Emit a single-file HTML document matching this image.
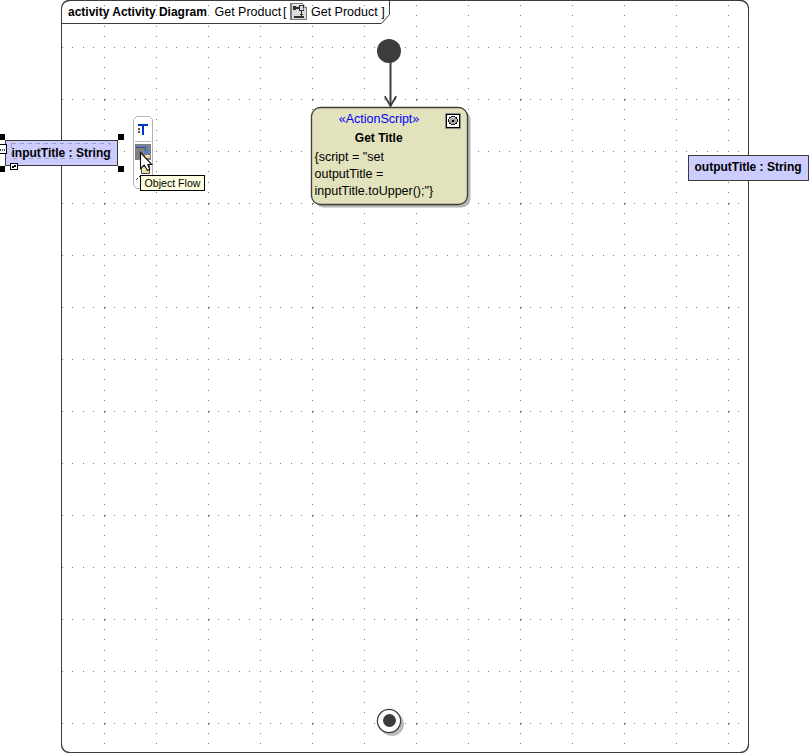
<!DOCTYPE html>
<html><head><meta charset="utf-8"><style>
html,body{margin:0;padding:0;background:#fff;width:809px;height:753px;overflow:hidden}
svg{position:absolute;left:0;top:0}
text{font-family:'Liberation Sans',sans-serif;}
</style></head><body>
<svg width="809" height="753" viewBox="0 0 809 753" shape-rendering="auto">
<!-- frame -->
<rect x="61.5" y="0.5" width="687" height="752" rx="8" ry="8" fill="#fff" stroke="none"/>
<g fill="#3c3c3c" shape-rendering="crispEdges">
<rect x="69" y="0" width="672" height="1"/>
<rect x="69" y="752" width="672" height="1"/>
<rect x="61" y="8" width="1" height="737"/>
<rect x="748" y="8" width="1" height="737"/>
</g>
<path d="M61.5 8.5A8 8 0 0 1 69.5 0.5M740.5 0.5A8 8 0 0 1 748.5 8.5M748.5 744.5A8 8 0 0 1 740.5 752.5M69.5 752.5A8 8 0 0 1 61.5 744.5" fill="none" stroke="#3c3c3c" stroke-width="1.35"/>
<!-- grid -->
<path d="M62 47h1v1h-1zM62 99h1v1h-1zM62 151h1v1h-1zM62 203h1v1h-1zM62 255h1v1h-1zM62 307h1v1h-1zM62 359h1v1h-1zM62 411h1v1h-1zM62 463h1v1h-1zM62 515h1v1h-1zM62 567h1v1h-1zM62 619h1v1h-1zM62 671h1v1h-1zM62 723h1v1h-1zM72 47h1v1h-1zM72 99h1v1h-1zM72 151h1v1h-1zM72 203h1v1h-1zM72 255h1v1h-1zM72 307h1v1h-1zM72 359h1v1h-1zM72 411h1v1h-1zM72 463h1v1h-1zM72 515h1v1h-1zM72 567h1v1h-1zM72 619h1v1h-1zM72 671h1v1h-1zM72 723h1v1h-1zM83 47h1v1h-1zM83 99h1v1h-1zM83 151h1v1h-1zM83 203h1v1h-1zM83 255h1v1h-1zM83 307h1v1h-1zM83 359h1v1h-1zM83 411h1v1h-1zM83 463h1v1h-1zM83 515h1v1h-1zM83 567h1v1h-1zM83 619h1v1h-1zM83 671h1v1h-1zM83 723h1v1h-1zM93 47h1v1h-1zM93 99h1v1h-1zM93 151h1v1h-1zM93 203h1v1h-1zM93 255h1v1h-1zM93 307h1v1h-1zM93 359h1v1h-1zM93 411h1v1h-1zM93 463h1v1h-1zM93 515h1v1h-1zM93 567h1v1h-1zM93 619h1v1h-1zM93 671h1v1h-1zM93 723h1v1h-1zM104 5h1v1h-1zM104 15h1v1h-1zM104 26h1v1h-1zM104 36h1v1h-1zM104 47h1v1h-1zM104 57h1v1h-1zM104 67h1v1h-1zM104 78h1v1h-1zM104 88h1v1h-1zM104 99h1v1h-1zM104 100h1v1h-1zM104 109h1v1h-1zM104 119h1v1h-1zM104 130h1v1h-1zM104 140h1v1h-1zM104 151h1v1h-1zM104 161h1v1h-1zM104 171h1v1h-1zM104 182h1v1h-1zM104 192h1v1h-1zM104 203h1v1h-1zM104 204h1v1h-1zM104 213h1v1h-1zM104 223h1v1h-1zM104 234h1v1h-1zM104 244h1v1h-1zM104 255h1v1h-1zM104 265h1v1h-1zM104 275h1v1h-1zM104 286h1v1h-1zM104 296h1v1h-1zM104 307h1v1h-1zM104 308h1v1h-1zM104 317h1v1h-1zM104 327h1v1h-1zM104 338h1v1h-1zM104 348h1v1h-1zM104 359h1v1h-1zM104 369h1v1h-1zM104 379h1v1h-1zM104 390h1v1h-1zM104 400h1v1h-1zM104 411h1v1h-1zM104 412h1v1h-1zM104 421h1v1h-1zM104 431h1v1h-1zM104 442h1v1h-1zM104 452h1v1h-1zM104 463h1v1h-1zM104 473h1v1h-1zM104 483h1v1h-1zM104 494h1v1h-1zM104 504h1v1h-1zM104 515h1v1h-1zM104 516h1v1h-1zM104 525h1v1h-1zM104 535h1v1h-1zM104 546h1v1h-1zM104 556h1v1h-1zM104 567h1v1h-1zM104 577h1v1h-1zM104 587h1v1h-1zM104 598h1v1h-1zM104 608h1v1h-1zM104 619h1v1h-1zM104 620h1v1h-1zM104 629h1v1h-1zM104 639h1v1h-1zM104 650h1v1h-1zM104 660h1v1h-1zM104 671h1v1h-1zM104 681h1v1h-1zM104 691h1v1h-1zM104 702h1v1h-1zM104 712h1v1h-1zM104 723h1v1h-1zM104 724h1v1h-1zM104 733h1v1h-1zM104 743h1v1h-1zM105 99h1v1h-1zM105 203h1v1h-1zM105 307h1v1h-1zM105 411h1v1h-1zM105 515h1v1h-1zM105 619h1v1h-1zM105 723h1v1h-1zM114 47h1v1h-1zM114 99h1v1h-1zM114 151h1v1h-1zM114 203h1v1h-1zM114 255h1v1h-1zM114 307h1v1h-1zM114 359h1v1h-1zM114 411h1v1h-1zM114 463h1v1h-1zM114 515h1v1h-1zM114 567h1v1h-1zM114 619h1v1h-1zM114 671h1v1h-1zM114 723h1v1h-1zM124 47h1v1h-1zM124 99h1v1h-1zM124 151h1v1h-1zM124 203h1v1h-1zM124 255h1v1h-1zM124 307h1v1h-1zM124 359h1v1h-1zM124 411h1v1h-1zM124 463h1v1h-1zM124 515h1v1h-1zM124 567h1v1h-1zM124 619h1v1h-1zM124 671h1v1h-1zM124 723h1v1h-1zM135 47h1v1h-1zM135 99h1v1h-1zM135 151h1v1h-1zM135 203h1v1h-1zM135 255h1v1h-1zM135 307h1v1h-1zM135 359h1v1h-1zM135 411h1v1h-1zM135 463h1v1h-1zM135 515h1v1h-1zM135 567h1v1h-1zM135 619h1v1h-1zM135 671h1v1h-1zM135 723h1v1h-1zM145 47h1v1h-1zM145 99h1v1h-1zM145 151h1v1h-1zM145 203h1v1h-1zM145 255h1v1h-1zM145 307h1v1h-1zM145 359h1v1h-1zM145 411h1v1h-1zM145 463h1v1h-1zM145 515h1v1h-1zM145 567h1v1h-1zM145 619h1v1h-1zM145 671h1v1h-1zM145 723h1v1h-1zM156 5h1v1h-1zM156 15h1v1h-1zM156 26h1v1h-1zM156 36h1v1h-1zM156 47h1v1h-1zM156 57h1v1h-1zM156 67h1v1h-1zM156 78h1v1h-1zM156 88h1v1h-1zM156 99h1v1h-1zM156 109h1v1h-1zM156 119h1v1h-1zM156 130h1v1h-1zM156 140h1v1h-1zM156 151h1v1h-1zM156 161h1v1h-1zM156 171h1v1h-1zM156 182h1v1h-1zM156 192h1v1h-1zM156 203h1v1h-1zM156 213h1v1h-1zM156 223h1v1h-1zM156 234h1v1h-1zM156 244h1v1h-1zM156 255h1v1h-1zM156 265h1v1h-1zM156 275h1v1h-1zM156 286h1v1h-1zM156 296h1v1h-1zM156 307h1v1h-1zM156 317h1v1h-1zM156 327h1v1h-1zM156 338h1v1h-1zM156 348h1v1h-1zM156 359h1v1h-1zM156 369h1v1h-1zM156 379h1v1h-1zM156 390h1v1h-1zM156 400h1v1h-1zM156 411h1v1h-1zM156 421h1v1h-1zM156 431h1v1h-1zM156 442h1v1h-1zM156 452h1v1h-1zM156 463h1v1h-1zM156 473h1v1h-1zM156 483h1v1h-1zM156 494h1v1h-1zM156 504h1v1h-1zM156 515h1v1h-1zM156 525h1v1h-1zM156 535h1v1h-1zM156 546h1v1h-1zM156 556h1v1h-1zM156 567h1v1h-1zM156 577h1v1h-1zM156 587h1v1h-1zM156 598h1v1h-1zM156 608h1v1h-1zM156 619h1v1h-1zM156 629h1v1h-1zM156 639h1v1h-1zM156 650h1v1h-1zM156 660h1v1h-1zM156 671h1v1h-1zM156 681h1v1h-1zM156 691h1v1h-1zM156 702h1v1h-1zM156 712h1v1h-1zM156 723h1v1h-1zM156 733h1v1h-1zM156 743h1v1h-1zM166 47h1v1h-1zM166 99h1v1h-1zM166 151h1v1h-1zM166 203h1v1h-1zM166 255h1v1h-1zM166 307h1v1h-1zM166 359h1v1h-1zM166 411h1v1h-1zM166 463h1v1h-1zM166 515h1v1h-1zM166 567h1v1h-1zM166 619h1v1h-1zM166 671h1v1h-1zM166 723h1v1h-1zM176 47h1v1h-1zM176 99h1v1h-1zM176 151h1v1h-1zM176 203h1v1h-1zM176 255h1v1h-1zM176 307h1v1h-1zM176 359h1v1h-1zM176 411h1v1h-1zM176 463h1v1h-1zM176 515h1v1h-1zM176 567h1v1h-1zM176 619h1v1h-1zM176 671h1v1h-1zM176 723h1v1h-1zM187 47h1v1h-1zM187 99h1v1h-1zM187 151h1v1h-1zM187 203h1v1h-1zM187 255h1v1h-1zM187 307h1v1h-1zM187 359h1v1h-1zM187 411h1v1h-1zM187 463h1v1h-1zM187 515h1v1h-1zM187 567h1v1h-1zM187 619h1v1h-1zM187 671h1v1h-1zM187 723h1v1h-1zM197 47h1v1h-1zM197 99h1v1h-1zM197 151h1v1h-1zM197 203h1v1h-1zM197 255h1v1h-1zM197 307h1v1h-1zM197 359h1v1h-1zM197 411h1v1h-1zM197 463h1v1h-1zM197 515h1v1h-1zM197 567h1v1h-1zM197 619h1v1h-1zM197 671h1v1h-1zM197 723h1v1h-1zM208 5h1v1h-1zM208 15h1v1h-1zM208 26h1v1h-1zM208 36h1v1h-1zM208 47h1v1h-1zM208 57h1v1h-1zM208 67h1v1h-1zM208 78h1v1h-1zM208 88h1v1h-1zM208 99h1v1h-1zM208 100h1v1h-1zM208 109h1v1h-1zM208 119h1v1h-1zM208 130h1v1h-1zM208 140h1v1h-1zM208 151h1v1h-1zM208 161h1v1h-1zM208 171h1v1h-1zM208 182h1v1h-1zM208 192h1v1h-1zM208 203h1v1h-1zM208 204h1v1h-1zM208 213h1v1h-1zM208 223h1v1h-1zM208 234h1v1h-1zM208 244h1v1h-1zM208 255h1v1h-1zM208 265h1v1h-1zM208 275h1v1h-1zM208 286h1v1h-1zM208 296h1v1h-1zM208 307h1v1h-1zM208 308h1v1h-1zM208 317h1v1h-1zM208 327h1v1h-1zM208 338h1v1h-1zM208 348h1v1h-1zM208 359h1v1h-1zM208 369h1v1h-1zM208 379h1v1h-1zM208 390h1v1h-1zM208 400h1v1h-1zM208 411h1v1h-1zM208 412h1v1h-1zM208 421h1v1h-1zM208 431h1v1h-1zM208 442h1v1h-1zM208 452h1v1h-1zM208 463h1v1h-1zM208 473h1v1h-1zM208 483h1v1h-1zM208 494h1v1h-1zM208 504h1v1h-1zM208 515h1v1h-1zM208 516h1v1h-1zM208 525h1v1h-1zM208 535h1v1h-1zM208 546h1v1h-1zM208 556h1v1h-1zM208 567h1v1h-1zM208 577h1v1h-1zM208 587h1v1h-1zM208 598h1v1h-1zM208 608h1v1h-1zM208 619h1v1h-1zM208 620h1v1h-1zM208 629h1v1h-1zM208 639h1v1h-1zM208 650h1v1h-1zM208 660h1v1h-1zM208 671h1v1h-1zM208 681h1v1h-1zM208 691h1v1h-1zM208 702h1v1h-1zM208 712h1v1h-1zM208 723h1v1h-1zM208 724h1v1h-1zM208 733h1v1h-1zM208 743h1v1h-1zM209 99h1v1h-1zM209 203h1v1h-1zM209 307h1v1h-1zM209 411h1v1h-1zM209 515h1v1h-1zM209 619h1v1h-1zM209 723h1v1h-1zM218 47h1v1h-1zM218 99h1v1h-1zM218 151h1v1h-1zM218 203h1v1h-1zM218 255h1v1h-1zM218 307h1v1h-1zM218 359h1v1h-1zM218 411h1v1h-1zM218 463h1v1h-1zM218 515h1v1h-1zM218 567h1v1h-1zM218 619h1v1h-1zM218 671h1v1h-1zM218 723h1v1h-1zM228 47h1v1h-1zM228 99h1v1h-1zM228 151h1v1h-1zM228 203h1v1h-1zM228 255h1v1h-1zM228 307h1v1h-1zM228 359h1v1h-1zM228 411h1v1h-1zM228 463h1v1h-1zM228 515h1v1h-1zM228 567h1v1h-1zM228 619h1v1h-1zM228 671h1v1h-1zM228 723h1v1h-1zM239 47h1v1h-1zM239 99h1v1h-1zM239 151h1v1h-1zM239 203h1v1h-1zM239 255h1v1h-1zM239 307h1v1h-1zM239 359h1v1h-1zM239 411h1v1h-1zM239 463h1v1h-1zM239 515h1v1h-1zM239 567h1v1h-1zM239 619h1v1h-1zM239 671h1v1h-1zM239 723h1v1h-1zM249 47h1v1h-1zM249 99h1v1h-1zM249 151h1v1h-1zM249 203h1v1h-1zM249 255h1v1h-1zM249 307h1v1h-1zM249 359h1v1h-1zM249 411h1v1h-1zM249 463h1v1h-1zM249 515h1v1h-1zM249 567h1v1h-1zM249 619h1v1h-1zM249 671h1v1h-1zM249 723h1v1h-1zM260 5h1v1h-1zM260 15h1v1h-1zM260 26h1v1h-1zM260 36h1v1h-1zM260 47h1v1h-1zM260 57h1v1h-1zM260 67h1v1h-1zM260 78h1v1h-1zM260 88h1v1h-1zM260 99h1v1h-1zM260 109h1v1h-1zM260 119h1v1h-1zM260 130h1v1h-1zM260 140h1v1h-1zM260 151h1v1h-1zM260 161h1v1h-1zM260 171h1v1h-1zM260 182h1v1h-1zM260 192h1v1h-1zM260 203h1v1h-1zM260 213h1v1h-1zM260 223h1v1h-1zM260 234h1v1h-1zM260 244h1v1h-1zM260 255h1v1h-1zM260 265h1v1h-1zM260 275h1v1h-1zM260 286h1v1h-1zM260 296h1v1h-1zM260 307h1v1h-1zM260 317h1v1h-1zM260 327h1v1h-1zM260 338h1v1h-1zM260 348h1v1h-1zM260 359h1v1h-1zM260 369h1v1h-1zM260 379h1v1h-1zM260 390h1v1h-1zM260 400h1v1h-1zM260 411h1v1h-1zM260 421h1v1h-1zM260 431h1v1h-1zM260 442h1v1h-1zM260 452h1v1h-1zM260 463h1v1h-1zM260 473h1v1h-1zM260 483h1v1h-1zM260 494h1v1h-1zM260 504h1v1h-1zM260 515h1v1h-1zM260 525h1v1h-1zM260 535h1v1h-1zM260 546h1v1h-1zM260 556h1v1h-1zM260 567h1v1h-1zM260 577h1v1h-1zM260 587h1v1h-1zM260 598h1v1h-1zM260 608h1v1h-1zM260 619h1v1h-1zM260 629h1v1h-1zM260 639h1v1h-1zM260 650h1v1h-1zM260 660h1v1h-1zM260 671h1v1h-1zM260 681h1v1h-1zM260 691h1v1h-1zM260 702h1v1h-1zM260 712h1v1h-1zM260 723h1v1h-1zM260 733h1v1h-1zM260 743h1v1h-1zM270 47h1v1h-1zM270 99h1v1h-1zM270 151h1v1h-1zM270 203h1v1h-1zM270 255h1v1h-1zM270 307h1v1h-1zM270 359h1v1h-1zM270 411h1v1h-1zM270 463h1v1h-1zM270 515h1v1h-1zM270 567h1v1h-1zM270 619h1v1h-1zM270 671h1v1h-1zM270 723h1v1h-1zM280 47h1v1h-1zM280 99h1v1h-1zM280 151h1v1h-1zM280 203h1v1h-1zM280 255h1v1h-1zM280 307h1v1h-1zM280 359h1v1h-1zM280 411h1v1h-1zM280 463h1v1h-1zM280 515h1v1h-1zM280 567h1v1h-1zM280 619h1v1h-1zM280 671h1v1h-1zM280 723h1v1h-1zM291 47h1v1h-1zM291 99h1v1h-1zM291 151h1v1h-1zM291 203h1v1h-1zM291 255h1v1h-1zM291 307h1v1h-1zM291 359h1v1h-1zM291 411h1v1h-1zM291 463h1v1h-1zM291 515h1v1h-1zM291 567h1v1h-1zM291 619h1v1h-1zM291 671h1v1h-1zM291 723h1v1h-1zM301 47h1v1h-1zM301 99h1v1h-1zM301 151h1v1h-1zM301 203h1v1h-1zM301 255h1v1h-1zM301 307h1v1h-1zM301 359h1v1h-1zM301 411h1v1h-1zM301 463h1v1h-1zM301 515h1v1h-1zM301 567h1v1h-1zM301 619h1v1h-1zM301 671h1v1h-1zM301 723h1v1h-1zM312 5h1v1h-1zM312 15h1v1h-1zM312 26h1v1h-1zM312 36h1v1h-1zM312 47h1v1h-1zM312 57h1v1h-1zM312 67h1v1h-1zM312 78h1v1h-1zM312 88h1v1h-1zM312 99h1v1h-1zM312 100h1v1h-1zM312 109h1v1h-1zM312 119h1v1h-1zM312 130h1v1h-1zM312 140h1v1h-1zM312 151h1v1h-1zM312 161h1v1h-1zM312 171h1v1h-1zM312 182h1v1h-1zM312 192h1v1h-1zM312 203h1v1h-1zM312 204h1v1h-1zM312 213h1v1h-1zM312 223h1v1h-1zM312 234h1v1h-1zM312 244h1v1h-1zM312 255h1v1h-1zM312 265h1v1h-1zM312 275h1v1h-1zM312 286h1v1h-1zM312 296h1v1h-1zM312 307h1v1h-1zM312 308h1v1h-1zM312 317h1v1h-1zM312 327h1v1h-1zM312 338h1v1h-1zM312 348h1v1h-1zM312 359h1v1h-1zM312 369h1v1h-1zM312 379h1v1h-1zM312 390h1v1h-1zM312 400h1v1h-1zM312 411h1v1h-1zM312 412h1v1h-1zM312 421h1v1h-1zM312 431h1v1h-1zM312 442h1v1h-1zM312 452h1v1h-1zM312 463h1v1h-1zM312 473h1v1h-1zM312 483h1v1h-1zM312 494h1v1h-1zM312 504h1v1h-1zM312 515h1v1h-1zM312 516h1v1h-1zM312 525h1v1h-1zM312 535h1v1h-1zM312 546h1v1h-1zM312 556h1v1h-1zM312 567h1v1h-1zM312 577h1v1h-1zM312 587h1v1h-1zM312 598h1v1h-1zM312 608h1v1h-1zM312 619h1v1h-1zM312 620h1v1h-1zM312 629h1v1h-1zM312 639h1v1h-1zM312 650h1v1h-1zM312 660h1v1h-1zM312 671h1v1h-1zM312 681h1v1h-1zM312 691h1v1h-1zM312 702h1v1h-1zM312 712h1v1h-1zM312 723h1v1h-1zM312 724h1v1h-1zM312 733h1v1h-1zM312 743h1v1h-1zM313 99h1v1h-1zM313 203h1v1h-1zM313 307h1v1h-1zM313 411h1v1h-1zM313 515h1v1h-1zM313 619h1v1h-1zM313 723h1v1h-1zM322 47h1v1h-1zM322 99h1v1h-1zM322 151h1v1h-1zM322 203h1v1h-1zM322 255h1v1h-1zM322 307h1v1h-1zM322 359h1v1h-1zM322 411h1v1h-1zM322 463h1v1h-1zM322 515h1v1h-1zM322 567h1v1h-1zM322 619h1v1h-1zM322 671h1v1h-1zM322 723h1v1h-1zM332 47h1v1h-1zM332 99h1v1h-1zM332 151h1v1h-1zM332 203h1v1h-1zM332 255h1v1h-1zM332 307h1v1h-1zM332 359h1v1h-1zM332 411h1v1h-1zM332 463h1v1h-1zM332 515h1v1h-1zM332 567h1v1h-1zM332 619h1v1h-1zM332 671h1v1h-1zM332 723h1v1h-1zM343 47h1v1h-1zM343 99h1v1h-1zM343 151h1v1h-1zM343 203h1v1h-1zM343 255h1v1h-1zM343 307h1v1h-1zM343 359h1v1h-1zM343 411h1v1h-1zM343 463h1v1h-1zM343 515h1v1h-1zM343 567h1v1h-1zM343 619h1v1h-1zM343 671h1v1h-1zM343 723h1v1h-1zM353 47h1v1h-1zM353 99h1v1h-1zM353 151h1v1h-1zM353 203h1v1h-1zM353 255h1v1h-1zM353 307h1v1h-1zM353 359h1v1h-1zM353 411h1v1h-1zM353 463h1v1h-1zM353 515h1v1h-1zM353 567h1v1h-1zM353 619h1v1h-1zM353 671h1v1h-1zM353 723h1v1h-1zM364 5h1v1h-1zM364 15h1v1h-1zM364 26h1v1h-1zM364 36h1v1h-1zM364 47h1v1h-1zM364 57h1v1h-1zM364 67h1v1h-1zM364 78h1v1h-1zM364 88h1v1h-1zM364 99h1v1h-1zM364 109h1v1h-1zM364 119h1v1h-1zM364 130h1v1h-1zM364 140h1v1h-1zM364 151h1v1h-1zM364 161h1v1h-1zM364 171h1v1h-1zM364 182h1v1h-1zM364 192h1v1h-1zM364 203h1v1h-1zM364 213h1v1h-1zM364 223h1v1h-1zM364 234h1v1h-1zM364 244h1v1h-1zM364 255h1v1h-1zM364 265h1v1h-1zM364 275h1v1h-1zM364 286h1v1h-1zM364 296h1v1h-1zM364 307h1v1h-1zM364 317h1v1h-1zM364 327h1v1h-1zM364 338h1v1h-1zM364 348h1v1h-1zM364 359h1v1h-1zM364 369h1v1h-1zM364 379h1v1h-1zM364 390h1v1h-1zM364 400h1v1h-1zM364 411h1v1h-1zM364 421h1v1h-1zM364 431h1v1h-1zM364 442h1v1h-1zM364 452h1v1h-1zM364 463h1v1h-1zM364 473h1v1h-1zM364 483h1v1h-1zM364 494h1v1h-1zM364 504h1v1h-1zM364 515h1v1h-1zM364 525h1v1h-1zM364 535h1v1h-1zM364 546h1v1h-1zM364 556h1v1h-1zM364 567h1v1h-1zM364 577h1v1h-1zM364 587h1v1h-1zM364 598h1v1h-1zM364 608h1v1h-1zM364 619h1v1h-1zM364 629h1v1h-1zM364 639h1v1h-1zM364 650h1v1h-1zM364 660h1v1h-1zM364 671h1v1h-1zM364 681h1v1h-1zM364 691h1v1h-1zM364 702h1v1h-1zM364 712h1v1h-1zM364 723h1v1h-1zM364 733h1v1h-1zM364 743h1v1h-1zM374 47h1v1h-1zM374 99h1v1h-1zM374 151h1v1h-1zM374 203h1v1h-1zM374 255h1v1h-1zM374 307h1v1h-1zM374 359h1v1h-1zM374 411h1v1h-1zM374 463h1v1h-1zM374 515h1v1h-1zM374 567h1v1h-1zM374 619h1v1h-1zM374 671h1v1h-1zM374 723h1v1h-1zM384 47h1v1h-1zM384 99h1v1h-1zM384 151h1v1h-1zM384 203h1v1h-1zM384 255h1v1h-1zM384 307h1v1h-1zM384 359h1v1h-1zM384 411h1v1h-1zM384 463h1v1h-1zM384 515h1v1h-1zM384 567h1v1h-1zM384 619h1v1h-1zM384 671h1v1h-1zM384 723h1v1h-1zM395 47h1v1h-1zM395 99h1v1h-1zM395 151h1v1h-1zM395 203h1v1h-1zM395 255h1v1h-1zM395 307h1v1h-1zM395 359h1v1h-1zM395 411h1v1h-1zM395 463h1v1h-1zM395 515h1v1h-1zM395 567h1v1h-1zM395 619h1v1h-1zM395 671h1v1h-1zM395 723h1v1h-1zM405 47h1v1h-1zM405 99h1v1h-1zM405 151h1v1h-1zM405 203h1v1h-1zM405 255h1v1h-1zM405 307h1v1h-1zM405 359h1v1h-1zM405 411h1v1h-1zM405 463h1v1h-1zM405 515h1v1h-1zM405 567h1v1h-1zM405 619h1v1h-1zM405 671h1v1h-1zM405 723h1v1h-1zM416 5h1v1h-1zM416 15h1v1h-1zM416 26h1v1h-1zM416 36h1v1h-1zM416 47h1v1h-1zM416 57h1v1h-1zM416 67h1v1h-1zM416 78h1v1h-1zM416 88h1v1h-1zM416 99h1v1h-1zM416 100h1v1h-1zM416 109h1v1h-1zM416 119h1v1h-1zM416 130h1v1h-1zM416 140h1v1h-1zM416 151h1v1h-1zM416 161h1v1h-1zM416 171h1v1h-1zM416 182h1v1h-1zM416 192h1v1h-1zM416 203h1v1h-1zM416 204h1v1h-1zM416 213h1v1h-1zM416 223h1v1h-1zM416 234h1v1h-1zM416 244h1v1h-1zM416 255h1v1h-1zM416 265h1v1h-1zM416 275h1v1h-1zM416 286h1v1h-1zM416 296h1v1h-1zM416 307h1v1h-1zM416 308h1v1h-1zM416 317h1v1h-1zM416 327h1v1h-1zM416 338h1v1h-1zM416 348h1v1h-1zM416 359h1v1h-1zM416 369h1v1h-1zM416 379h1v1h-1zM416 390h1v1h-1zM416 400h1v1h-1zM416 411h1v1h-1zM416 412h1v1h-1zM416 421h1v1h-1zM416 431h1v1h-1zM416 442h1v1h-1zM416 452h1v1h-1zM416 463h1v1h-1zM416 473h1v1h-1zM416 483h1v1h-1zM416 494h1v1h-1zM416 504h1v1h-1zM416 515h1v1h-1zM416 516h1v1h-1zM416 525h1v1h-1zM416 535h1v1h-1zM416 546h1v1h-1zM416 556h1v1h-1zM416 567h1v1h-1zM416 577h1v1h-1zM416 587h1v1h-1zM416 598h1v1h-1zM416 608h1v1h-1zM416 619h1v1h-1zM416 620h1v1h-1zM416 629h1v1h-1zM416 639h1v1h-1zM416 650h1v1h-1zM416 660h1v1h-1zM416 671h1v1h-1zM416 681h1v1h-1zM416 691h1v1h-1zM416 702h1v1h-1zM416 712h1v1h-1zM416 723h1v1h-1zM416 724h1v1h-1zM416 733h1v1h-1zM416 743h1v1h-1zM417 99h1v1h-1zM417 203h1v1h-1zM417 307h1v1h-1zM417 411h1v1h-1zM417 515h1v1h-1zM417 619h1v1h-1zM417 723h1v1h-1zM426 47h1v1h-1zM426 99h1v1h-1zM426 151h1v1h-1zM426 203h1v1h-1zM426 255h1v1h-1zM426 307h1v1h-1zM426 359h1v1h-1zM426 411h1v1h-1zM426 463h1v1h-1zM426 515h1v1h-1zM426 567h1v1h-1zM426 619h1v1h-1zM426 671h1v1h-1zM426 723h1v1h-1zM436 47h1v1h-1zM436 99h1v1h-1zM436 151h1v1h-1zM436 203h1v1h-1zM436 255h1v1h-1zM436 307h1v1h-1zM436 359h1v1h-1zM436 411h1v1h-1zM436 463h1v1h-1zM436 515h1v1h-1zM436 567h1v1h-1zM436 619h1v1h-1zM436 671h1v1h-1zM436 723h1v1h-1zM447 47h1v1h-1zM447 99h1v1h-1zM447 151h1v1h-1zM447 203h1v1h-1zM447 255h1v1h-1zM447 307h1v1h-1zM447 359h1v1h-1zM447 411h1v1h-1zM447 463h1v1h-1zM447 515h1v1h-1zM447 567h1v1h-1zM447 619h1v1h-1zM447 671h1v1h-1zM447 723h1v1h-1zM457 47h1v1h-1zM457 99h1v1h-1zM457 151h1v1h-1zM457 203h1v1h-1zM457 255h1v1h-1zM457 307h1v1h-1zM457 359h1v1h-1zM457 411h1v1h-1zM457 463h1v1h-1zM457 515h1v1h-1zM457 567h1v1h-1zM457 619h1v1h-1zM457 671h1v1h-1zM457 723h1v1h-1zM468 5h1v1h-1zM468 15h1v1h-1zM468 26h1v1h-1zM468 36h1v1h-1zM468 47h1v1h-1zM468 57h1v1h-1zM468 67h1v1h-1zM468 78h1v1h-1zM468 88h1v1h-1zM468 99h1v1h-1zM468 109h1v1h-1zM468 119h1v1h-1zM468 130h1v1h-1zM468 140h1v1h-1zM468 151h1v1h-1zM468 161h1v1h-1zM468 171h1v1h-1zM468 182h1v1h-1zM468 192h1v1h-1zM468 203h1v1h-1zM468 213h1v1h-1zM468 223h1v1h-1zM468 234h1v1h-1zM468 244h1v1h-1zM468 255h1v1h-1zM468 265h1v1h-1zM468 275h1v1h-1zM468 286h1v1h-1zM468 296h1v1h-1zM468 307h1v1h-1zM468 317h1v1h-1zM468 327h1v1h-1zM468 338h1v1h-1zM468 348h1v1h-1zM468 359h1v1h-1zM468 369h1v1h-1zM468 379h1v1h-1zM468 390h1v1h-1zM468 400h1v1h-1zM468 411h1v1h-1zM468 421h1v1h-1zM468 431h1v1h-1zM468 442h1v1h-1zM468 452h1v1h-1zM468 463h1v1h-1zM468 473h1v1h-1zM468 483h1v1h-1zM468 494h1v1h-1zM468 504h1v1h-1zM468 515h1v1h-1zM468 525h1v1h-1zM468 535h1v1h-1zM468 546h1v1h-1zM468 556h1v1h-1zM468 567h1v1h-1zM468 577h1v1h-1zM468 587h1v1h-1zM468 598h1v1h-1zM468 608h1v1h-1zM468 619h1v1h-1zM468 629h1v1h-1zM468 639h1v1h-1zM468 650h1v1h-1zM468 660h1v1h-1zM468 671h1v1h-1zM468 681h1v1h-1zM468 691h1v1h-1zM468 702h1v1h-1zM468 712h1v1h-1zM468 723h1v1h-1zM468 733h1v1h-1zM468 743h1v1h-1zM478 47h1v1h-1zM478 99h1v1h-1zM478 151h1v1h-1zM478 203h1v1h-1zM478 255h1v1h-1zM478 307h1v1h-1zM478 359h1v1h-1zM478 411h1v1h-1zM478 463h1v1h-1zM478 515h1v1h-1zM478 567h1v1h-1zM478 619h1v1h-1zM478 671h1v1h-1zM478 723h1v1h-1zM488 47h1v1h-1zM488 99h1v1h-1zM488 151h1v1h-1zM488 203h1v1h-1zM488 255h1v1h-1zM488 307h1v1h-1zM488 359h1v1h-1zM488 411h1v1h-1zM488 463h1v1h-1zM488 515h1v1h-1zM488 567h1v1h-1zM488 619h1v1h-1zM488 671h1v1h-1zM488 723h1v1h-1zM499 47h1v1h-1zM499 99h1v1h-1zM499 151h1v1h-1zM499 203h1v1h-1zM499 255h1v1h-1zM499 307h1v1h-1zM499 359h1v1h-1zM499 411h1v1h-1zM499 463h1v1h-1zM499 515h1v1h-1zM499 567h1v1h-1zM499 619h1v1h-1zM499 671h1v1h-1zM499 723h1v1h-1zM509 47h1v1h-1zM509 99h1v1h-1zM509 151h1v1h-1zM509 203h1v1h-1zM509 255h1v1h-1zM509 307h1v1h-1zM509 359h1v1h-1zM509 411h1v1h-1zM509 463h1v1h-1zM509 515h1v1h-1zM509 567h1v1h-1zM509 619h1v1h-1zM509 671h1v1h-1zM509 723h1v1h-1zM520 5h1v1h-1zM520 15h1v1h-1zM520 26h1v1h-1zM520 36h1v1h-1zM520 47h1v1h-1zM520 57h1v1h-1zM520 67h1v1h-1zM520 78h1v1h-1zM520 88h1v1h-1zM520 99h1v1h-1zM520 100h1v1h-1zM520 109h1v1h-1zM520 119h1v1h-1zM520 130h1v1h-1zM520 140h1v1h-1zM520 151h1v1h-1zM520 161h1v1h-1zM520 171h1v1h-1zM520 182h1v1h-1zM520 192h1v1h-1zM520 203h1v1h-1zM520 204h1v1h-1zM520 213h1v1h-1zM520 223h1v1h-1zM520 234h1v1h-1zM520 244h1v1h-1zM520 255h1v1h-1zM520 265h1v1h-1zM520 275h1v1h-1zM520 286h1v1h-1zM520 296h1v1h-1zM520 307h1v1h-1zM520 308h1v1h-1zM520 317h1v1h-1zM520 327h1v1h-1zM520 338h1v1h-1zM520 348h1v1h-1zM520 359h1v1h-1zM520 369h1v1h-1zM520 379h1v1h-1zM520 390h1v1h-1zM520 400h1v1h-1zM520 411h1v1h-1zM520 412h1v1h-1zM520 421h1v1h-1zM520 431h1v1h-1zM520 442h1v1h-1zM520 452h1v1h-1zM520 463h1v1h-1zM520 473h1v1h-1zM520 483h1v1h-1zM520 494h1v1h-1zM520 504h1v1h-1zM520 515h1v1h-1zM520 516h1v1h-1zM520 525h1v1h-1zM520 535h1v1h-1zM520 546h1v1h-1zM520 556h1v1h-1zM520 567h1v1h-1zM520 577h1v1h-1zM520 587h1v1h-1zM520 598h1v1h-1zM520 608h1v1h-1zM520 619h1v1h-1zM520 620h1v1h-1zM520 629h1v1h-1zM520 639h1v1h-1zM520 650h1v1h-1zM520 660h1v1h-1zM520 671h1v1h-1zM520 681h1v1h-1zM520 691h1v1h-1zM520 702h1v1h-1zM520 712h1v1h-1zM520 723h1v1h-1zM520 724h1v1h-1zM520 733h1v1h-1zM520 743h1v1h-1zM521 99h1v1h-1zM521 203h1v1h-1zM521 307h1v1h-1zM521 411h1v1h-1zM521 515h1v1h-1zM521 619h1v1h-1zM521 723h1v1h-1zM530 47h1v1h-1zM530 99h1v1h-1zM530 151h1v1h-1zM530 203h1v1h-1zM530 255h1v1h-1zM530 307h1v1h-1zM530 359h1v1h-1zM530 411h1v1h-1zM530 463h1v1h-1zM530 515h1v1h-1zM530 567h1v1h-1zM530 619h1v1h-1zM530 671h1v1h-1zM530 723h1v1h-1zM540 47h1v1h-1zM540 99h1v1h-1zM540 151h1v1h-1zM540 203h1v1h-1zM540 255h1v1h-1zM540 307h1v1h-1zM540 359h1v1h-1zM540 411h1v1h-1zM540 463h1v1h-1zM540 515h1v1h-1zM540 567h1v1h-1zM540 619h1v1h-1zM540 671h1v1h-1zM540 723h1v1h-1zM551 47h1v1h-1zM551 99h1v1h-1zM551 151h1v1h-1zM551 203h1v1h-1zM551 255h1v1h-1zM551 307h1v1h-1zM551 359h1v1h-1zM551 411h1v1h-1zM551 463h1v1h-1zM551 515h1v1h-1zM551 567h1v1h-1zM551 619h1v1h-1zM551 671h1v1h-1zM551 723h1v1h-1zM561 47h1v1h-1zM561 99h1v1h-1zM561 151h1v1h-1zM561 203h1v1h-1zM561 255h1v1h-1zM561 307h1v1h-1zM561 359h1v1h-1zM561 411h1v1h-1zM561 463h1v1h-1zM561 515h1v1h-1zM561 567h1v1h-1zM561 619h1v1h-1zM561 671h1v1h-1zM561 723h1v1h-1zM572 5h1v1h-1zM572 15h1v1h-1zM572 26h1v1h-1zM572 36h1v1h-1zM572 47h1v1h-1zM572 57h1v1h-1zM572 67h1v1h-1zM572 78h1v1h-1zM572 88h1v1h-1zM572 99h1v1h-1zM572 109h1v1h-1zM572 119h1v1h-1zM572 130h1v1h-1zM572 140h1v1h-1zM572 151h1v1h-1zM572 161h1v1h-1zM572 171h1v1h-1zM572 182h1v1h-1zM572 192h1v1h-1zM572 203h1v1h-1zM572 213h1v1h-1zM572 223h1v1h-1zM572 234h1v1h-1zM572 244h1v1h-1zM572 255h1v1h-1zM572 265h1v1h-1zM572 275h1v1h-1zM572 286h1v1h-1zM572 296h1v1h-1zM572 307h1v1h-1zM572 317h1v1h-1zM572 327h1v1h-1zM572 338h1v1h-1zM572 348h1v1h-1zM572 359h1v1h-1zM572 369h1v1h-1zM572 379h1v1h-1zM572 390h1v1h-1zM572 400h1v1h-1zM572 411h1v1h-1zM572 421h1v1h-1zM572 431h1v1h-1zM572 442h1v1h-1zM572 452h1v1h-1zM572 463h1v1h-1zM572 473h1v1h-1zM572 483h1v1h-1zM572 494h1v1h-1zM572 504h1v1h-1zM572 515h1v1h-1zM572 525h1v1h-1zM572 535h1v1h-1zM572 546h1v1h-1zM572 556h1v1h-1zM572 567h1v1h-1zM572 577h1v1h-1zM572 587h1v1h-1zM572 598h1v1h-1zM572 608h1v1h-1zM572 619h1v1h-1zM572 629h1v1h-1zM572 639h1v1h-1zM572 650h1v1h-1zM572 660h1v1h-1zM572 671h1v1h-1zM572 681h1v1h-1zM572 691h1v1h-1zM572 702h1v1h-1zM572 712h1v1h-1zM572 723h1v1h-1zM572 733h1v1h-1zM572 743h1v1h-1zM582 47h1v1h-1zM582 99h1v1h-1zM582 151h1v1h-1zM582 203h1v1h-1zM582 255h1v1h-1zM582 307h1v1h-1zM582 359h1v1h-1zM582 411h1v1h-1zM582 463h1v1h-1zM582 515h1v1h-1zM582 567h1v1h-1zM582 619h1v1h-1zM582 671h1v1h-1zM582 723h1v1h-1zM592 47h1v1h-1zM592 99h1v1h-1zM592 151h1v1h-1zM592 203h1v1h-1zM592 255h1v1h-1zM592 307h1v1h-1zM592 359h1v1h-1zM592 411h1v1h-1zM592 463h1v1h-1zM592 515h1v1h-1zM592 567h1v1h-1zM592 619h1v1h-1zM592 671h1v1h-1zM592 723h1v1h-1zM603 47h1v1h-1zM603 99h1v1h-1zM603 151h1v1h-1zM603 203h1v1h-1zM603 255h1v1h-1zM603 307h1v1h-1zM603 359h1v1h-1zM603 411h1v1h-1zM603 463h1v1h-1zM603 515h1v1h-1zM603 567h1v1h-1zM603 619h1v1h-1zM603 671h1v1h-1zM603 723h1v1h-1zM613 47h1v1h-1zM613 99h1v1h-1zM613 151h1v1h-1zM613 203h1v1h-1zM613 255h1v1h-1zM613 307h1v1h-1zM613 359h1v1h-1zM613 411h1v1h-1zM613 463h1v1h-1zM613 515h1v1h-1zM613 567h1v1h-1zM613 619h1v1h-1zM613 671h1v1h-1zM613 723h1v1h-1zM624 5h1v1h-1zM624 15h1v1h-1zM624 26h1v1h-1zM624 36h1v1h-1zM624 47h1v1h-1zM624 57h1v1h-1zM624 67h1v1h-1zM624 78h1v1h-1zM624 88h1v1h-1zM624 99h1v1h-1zM624 100h1v1h-1zM624 109h1v1h-1zM624 119h1v1h-1zM624 130h1v1h-1zM624 140h1v1h-1zM624 151h1v1h-1zM624 161h1v1h-1zM624 171h1v1h-1zM624 182h1v1h-1zM624 192h1v1h-1zM624 203h1v1h-1zM624 204h1v1h-1zM624 213h1v1h-1zM624 223h1v1h-1zM624 234h1v1h-1zM624 244h1v1h-1zM624 255h1v1h-1zM624 265h1v1h-1zM624 275h1v1h-1zM624 286h1v1h-1zM624 296h1v1h-1zM624 307h1v1h-1zM624 308h1v1h-1zM624 317h1v1h-1zM624 327h1v1h-1zM624 338h1v1h-1zM624 348h1v1h-1zM624 359h1v1h-1zM624 369h1v1h-1zM624 379h1v1h-1zM624 390h1v1h-1zM624 400h1v1h-1zM624 411h1v1h-1zM624 412h1v1h-1zM624 421h1v1h-1zM624 431h1v1h-1zM624 442h1v1h-1zM624 452h1v1h-1zM624 463h1v1h-1zM624 473h1v1h-1zM624 483h1v1h-1zM624 494h1v1h-1zM624 504h1v1h-1zM624 515h1v1h-1zM624 516h1v1h-1zM624 525h1v1h-1zM624 535h1v1h-1zM624 546h1v1h-1zM624 556h1v1h-1zM624 567h1v1h-1zM624 577h1v1h-1zM624 587h1v1h-1zM624 598h1v1h-1zM624 608h1v1h-1zM624 619h1v1h-1zM624 620h1v1h-1zM624 629h1v1h-1zM624 639h1v1h-1zM624 650h1v1h-1zM624 660h1v1h-1zM624 671h1v1h-1zM624 681h1v1h-1zM624 691h1v1h-1zM624 702h1v1h-1zM624 712h1v1h-1zM624 723h1v1h-1zM624 724h1v1h-1zM624 733h1v1h-1zM624 743h1v1h-1zM625 99h1v1h-1zM625 203h1v1h-1zM625 307h1v1h-1zM625 411h1v1h-1zM625 515h1v1h-1zM625 619h1v1h-1zM625 723h1v1h-1zM634 47h1v1h-1zM634 99h1v1h-1zM634 151h1v1h-1zM634 203h1v1h-1zM634 255h1v1h-1zM634 307h1v1h-1zM634 359h1v1h-1zM634 411h1v1h-1zM634 463h1v1h-1zM634 515h1v1h-1zM634 567h1v1h-1zM634 619h1v1h-1zM634 671h1v1h-1zM634 723h1v1h-1zM644 47h1v1h-1zM644 99h1v1h-1zM644 151h1v1h-1zM644 203h1v1h-1zM644 255h1v1h-1zM644 307h1v1h-1zM644 359h1v1h-1zM644 411h1v1h-1zM644 463h1v1h-1zM644 515h1v1h-1zM644 567h1v1h-1zM644 619h1v1h-1zM644 671h1v1h-1zM644 723h1v1h-1zM655 47h1v1h-1zM655 99h1v1h-1zM655 151h1v1h-1zM655 203h1v1h-1zM655 255h1v1h-1zM655 307h1v1h-1zM655 359h1v1h-1zM655 411h1v1h-1zM655 463h1v1h-1zM655 515h1v1h-1zM655 567h1v1h-1zM655 619h1v1h-1zM655 671h1v1h-1zM655 723h1v1h-1zM665 47h1v1h-1zM665 99h1v1h-1zM665 151h1v1h-1zM665 203h1v1h-1zM665 255h1v1h-1zM665 307h1v1h-1zM665 359h1v1h-1zM665 411h1v1h-1zM665 463h1v1h-1zM665 515h1v1h-1zM665 567h1v1h-1zM665 619h1v1h-1zM665 671h1v1h-1zM665 723h1v1h-1zM676 5h1v1h-1zM676 15h1v1h-1zM676 26h1v1h-1zM676 36h1v1h-1zM676 47h1v1h-1zM676 57h1v1h-1zM676 67h1v1h-1zM676 78h1v1h-1zM676 88h1v1h-1zM676 99h1v1h-1zM676 109h1v1h-1zM676 119h1v1h-1zM676 130h1v1h-1zM676 140h1v1h-1zM676 151h1v1h-1zM676 161h1v1h-1zM676 171h1v1h-1zM676 182h1v1h-1zM676 192h1v1h-1zM676 203h1v1h-1zM676 213h1v1h-1zM676 223h1v1h-1zM676 234h1v1h-1zM676 244h1v1h-1zM676 255h1v1h-1zM676 265h1v1h-1zM676 275h1v1h-1zM676 286h1v1h-1zM676 296h1v1h-1zM676 307h1v1h-1zM676 317h1v1h-1zM676 327h1v1h-1zM676 338h1v1h-1zM676 348h1v1h-1zM676 359h1v1h-1zM676 369h1v1h-1zM676 379h1v1h-1zM676 390h1v1h-1zM676 400h1v1h-1zM676 411h1v1h-1zM676 421h1v1h-1zM676 431h1v1h-1zM676 442h1v1h-1zM676 452h1v1h-1zM676 463h1v1h-1zM676 473h1v1h-1zM676 483h1v1h-1zM676 494h1v1h-1zM676 504h1v1h-1zM676 515h1v1h-1zM676 525h1v1h-1zM676 535h1v1h-1zM676 546h1v1h-1zM676 556h1v1h-1zM676 567h1v1h-1zM676 577h1v1h-1zM676 587h1v1h-1zM676 598h1v1h-1zM676 608h1v1h-1zM676 619h1v1h-1zM676 629h1v1h-1zM676 639h1v1h-1zM676 650h1v1h-1zM676 660h1v1h-1zM676 671h1v1h-1zM676 681h1v1h-1zM676 691h1v1h-1zM676 702h1v1h-1zM676 712h1v1h-1zM676 723h1v1h-1zM676 733h1v1h-1zM676 743h1v1h-1zM686 47h1v1h-1zM686 99h1v1h-1zM686 151h1v1h-1zM686 203h1v1h-1zM686 255h1v1h-1zM686 307h1v1h-1zM686 359h1v1h-1zM686 411h1v1h-1zM686 463h1v1h-1zM686 515h1v1h-1zM686 567h1v1h-1zM686 619h1v1h-1zM686 671h1v1h-1zM686 723h1v1h-1zM696 47h1v1h-1zM696 99h1v1h-1zM696 151h1v1h-1zM696 203h1v1h-1zM696 255h1v1h-1zM696 307h1v1h-1zM696 359h1v1h-1zM696 411h1v1h-1zM696 463h1v1h-1zM696 515h1v1h-1zM696 567h1v1h-1zM696 619h1v1h-1zM696 671h1v1h-1zM696 723h1v1h-1zM707 47h1v1h-1zM707 99h1v1h-1zM707 151h1v1h-1zM707 203h1v1h-1zM707 255h1v1h-1zM707 307h1v1h-1zM707 359h1v1h-1zM707 411h1v1h-1zM707 463h1v1h-1zM707 515h1v1h-1zM707 567h1v1h-1zM707 619h1v1h-1zM707 671h1v1h-1zM707 723h1v1h-1zM717 47h1v1h-1zM717 99h1v1h-1zM717 151h1v1h-1zM717 203h1v1h-1zM717 255h1v1h-1zM717 307h1v1h-1zM717 359h1v1h-1zM717 411h1v1h-1zM717 463h1v1h-1zM717 515h1v1h-1zM717 567h1v1h-1zM717 619h1v1h-1zM717 671h1v1h-1zM717 723h1v1h-1zM728 5h1v1h-1zM728 15h1v1h-1zM728 26h1v1h-1zM728 36h1v1h-1zM728 47h1v1h-1zM728 57h1v1h-1zM728 67h1v1h-1zM728 78h1v1h-1zM728 88h1v1h-1zM728 99h1v1h-1zM728 100h1v1h-1zM728 109h1v1h-1zM728 119h1v1h-1zM728 130h1v1h-1zM728 140h1v1h-1zM728 151h1v1h-1zM728 161h1v1h-1zM728 171h1v1h-1zM728 182h1v1h-1zM728 192h1v1h-1zM728 203h1v1h-1zM728 204h1v1h-1zM728 213h1v1h-1zM728 223h1v1h-1zM728 234h1v1h-1zM728 244h1v1h-1zM728 255h1v1h-1zM728 265h1v1h-1zM728 275h1v1h-1zM728 286h1v1h-1zM728 296h1v1h-1zM728 307h1v1h-1zM728 308h1v1h-1zM728 317h1v1h-1zM728 327h1v1h-1zM728 338h1v1h-1zM728 348h1v1h-1zM728 359h1v1h-1zM728 369h1v1h-1zM728 379h1v1h-1zM728 390h1v1h-1zM728 400h1v1h-1zM728 411h1v1h-1zM728 412h1v1h-1zM728 421h1v1h-1zM728 431h1v1h-1zM728 442h1v1h-1zM728 452h1v1h-1zM728 463h1v1h-1zM728 473h1v1h-1zM728 483h1v1h-1zM728 494h1v1h-1zM728 504h1v1h-1zM728 515h1v1h-1zM728 516h1v1h-1zM728 525h1v1h-1zM728 535h1v1h-1zM728 546h1v1h-1zM728 556h1v1h-1zM728 567h1v1h-1zM728 577h1v1h-1zM728 587h1v1h-1zM728 598h1v1h-1zM728 608h1v1h-1zM728 619h1v1h-1zM728 620h1v1h-1zM728 629h1v1h-1zM728 639h1v1h-1zM728 650h1v1h-1zM728 660h1v1h-1zM728 671h1v1h-1zM728 681h1v1h-1zM728 691h1v1h-1zM728 702h1v1h-1zM728 712h1v1h-1zM728 723h1v1h-1zM728 724h1v1h-1zM728 733h1v1h-1zM728 743h1v1h-1zM729 99h1v1h-1zM729 203h1v1h-1zM729 307h1v1h-1zM729 411h1v1h-1zM729 515h1v1h-1zM729 619h1v1h-1zM729 723h1v1h-1zM738 47h1v1h-1zM738 99h1v1h-1zM738 151h1v1h-1zM738 203h1v1h-1zM738 255h1v1h-1zM738 307h1v1h-1zM738 359h1v1h-1zM738 411h1v1h-1zM738 463h1v1h-1zM738 515h1v1h-1zM738 567h1v1h-1zM738 619h1v1h-1zM738 671h1v1h-1zM738 723h1v1h-1z" fill="#7a7a7a" shape-rendering="crispEdges"/>
<!-- header pentagon -->
<path d="M61.5 23.5H381.5L389.5 14.5V0.5" fill="none" stroke="#3c3c3c" stroke-width="1"/>
<text x="68" y="16" font-size="12" font-weight="bold" fill="#000">activity Activity Diagram</text>
<text x="214.5" y="16" font-size="12.5" fill="#000">Get Product</text><text x="283" y="16" font-size="12.5" fill="#000">[</text>
<text x="311" y="16" font-size="12.5" fill="#000">Get Product ]</text>
<!-- header icon -->
<g shape-rendering="crispEdges">
<path d="M292 4H302L306 8V19H292Z" fill="#dadada"/>
<rect x="292" y="4" width="10" height="1" fill="#f2f2f2"/>
<rect x="290" y="3" width="2" height="17" fill="#7c7c7c"/>
<rect x="290" y="3" width="13" height="1" fill="#7c7c7c"/>
<rect x="290" y="19" width="17" height="1" fill="#7c7c7c"/>
<rect x="306" y="7" width="1" height="13" fill="#7c7c7c"/>
<path d="M303 4L306 7H303Z" fill="#fff"/>
<rect x="302" y="7" width="5" height="1" fill="#8a8a8a"/>
<rect x="303" y="4" width="1" height="1" fill="#9a9a9a"/><rect x="304" y="5" width="1" height="1" fill="#9a9a9a"/><rect x="305" y="6" width="1" height="1" fill="#9a9a9a"/>
<rect x="293" y="6" width="3" height="4" fill="#303030"/>
<rect x="296" y="7" width="3" height="2" fill="#303030"/>
<rect x="299" y="5" width="5" height="6" fill="#303030"/>
<rect x="300" y="6" width="3" height="4" fill="#cddcf4"/>
<rect x="303" y="8" width="1" height="2" fill="#6a7a90"/>
<rect x="301" y="11" width="1" height="6" fill="#303030"/>
<rect x="300" y="14" width="3" height="1" fill="#303030"/>
<rect x="294" y="16" width="10" height="2" fill="#303030"/>
</g>
<!-- initial node -->
<circle cx="389" cy="51" r="12" fill="#3c3c3c"/>
<line x1="390.5" y1="62" x2="390.5" y2="106" stroke="#3c3c3c" stroke-width="2"/>
<path d="M384.8 96.3L390.5 106L396.2 96.3" fill="none" stroke="#3c3c3c" stroke-width="1.8"/>
<!-- action -->
<rect x="314.5" y="110.5" width="156" height="97" rx="9" fill="#b4b4b4"/>
<rect x="311.5" y="107.5" width="156" height="97" rx="9" fill="#e2e2bd" stroke="#3c3c3c" stroke-width="1.3"/>
<text x="379" y="123" font-size="12.5" fill="#0000ff" text-anchor="middle">«ActionScript»</text>
<text x="378.7" y="141.5" font-size="12" font-weight="bold" fill="#000" text-anchor="middle">Get Title</text>
<text x="314.5" y="160.8" font-size="12.5" fill="#000">{script = "set</text>
<text x="314.5" y="178.1" font-size="12.5" fill="#000">outputTitle =</text>
<text x="314.5" y="195" font-size="12.5" fill="#000">inputTitle.toUpper();"}</text>
<g shape-rendering="crispEdges">
<rect x="445" y="113" width="16" height="16" fill="#8c8c8c"/>
<rect x="446" y="114" width="14" height="14" fill="#000"/>
<rect x="447" y="115" width="12" height="12" fill="#fff"/>
<rect x="445" y="113" width="1" height="1" fill="#b0b0a0"/><rect x="460" y="113" width="1" height="1" fill="#b0b0a0"/><rect x="445" y="128" width="1" height="1" fill="#b0b0a0"/><rect x="460" y="128" width="1" height="1" fill="#b0b0a0"/>
<rect x="451" y="116" width="1" height="1" fill="#1a1a1a"/><rect x="452" y="116" width="1" height="1" fill="#1a1a1a"/><rect x="453" y="116" width="1" height="1" fill="#1a1a1a"/><rect x="454" y="116" width="1" height="1" fill="#1a1a1a"/><rect x="449" y="117" width="1" height="1" fill="#1a1a1a"/><rect x="450" y="117" width="1" height="1" fill="#1a1a1a"/><rect x="451" y="117" width="1" height="1" fill="#a6a6a6"/><rect x="452" y="117" width="1" height="1" fill="#f0f0f0"/><rect x="453" y="117" width="1" height="1" fill="#f0f0f0"/><rect x="454" y="117" width="1" height="1" fill="#a6a6a6"/><rect x="455" y="117" width="1" height="1" fill="#1a1a1a"/><rect x="456" y="117" width="1" height="1" fill="#1a1a1a"/><rect x="449" y="118" width="1" height="1" fill="#1a1a1a"/><rect x="450" y="118" width="1" height="1" fill="#f0f0f0"/><rect x="451" y="118" width="1" height="1" fill="#a6a6a6"/><rect x="452" y="118" width="1" height="1" fill="#a6a6a6"/><rect x="453" y="118" width="1" height="1" fill="#a6a6a6"/><rect x="454" y="118" width="1" height="1" fill="#a6a6a6"/><rect x="455" y="118" width="1" height="1" fill="#a6a6a6"/><rect x="456" y="118" width="1" height="1" fill="#1a1a1a"/><rect x="448" y="119" width="1" height="1" fill="#1a1a1a"/><rect x="449" y="119" width="1" height="1" fill="#f0f0f0"/><rect x="450" y="119" width="1" height="1" fill="#a6a6a6"/><rect x="451" y="119" width="1" height="1" fill="#a6a6a6"/><rect x="452" y="119" width="1" height="1" fill="#a6a6a6"/><rect x="453" y="119" width="1" height="1" fill="#a6a6a6"/><rect x="454" y="119" width="1" height="1" fill="#a6a6a6"/><rect x="455" y="119" width="1" height="1" fill="#a6a6a6"/><rect x="456" y="119" width="1" height="1" fill="#a6a6a6"/><rect x="457" y="119" width="1" height="1" fill="#1a1a1a"/><rect x="448" y="120" width="1" height="1" fill="#1a1a1a"/><rect x="449" y="120" width="1" height="1" fill="#a6a6a6"/><rect x="450" y="120" width="1" height="1" fill="#a6a6a6"/><rect x="451" y="120" width="1" height="1" fill="#a6a6a6"/><rect x="452" y="120" width="1" height="1" fill="#000"/><rect x="453" y="120" width="1" height="1" fill="#000"/><rect x="454" y="120" width="1" height="1" fill="#a6a6a6"/><rect x="455" y="120" width="1" height="1" fill="#a6a6a6"/><rect x="456" y="120" width="1" height="1" fill="#a6a6a6"/><rect x="457" y="120" width="1" height="1" fill="#1a1a1a"/><rect x="448" y="121" width="1" height="1" fill="#1a1a1a"/><rect x="449" y="121" width="1" height="1" fill="#a6a6a6"/><rect x="450" y="121" width="1" height="1" fill="#a6a6a6"/><rect x="451" y="121" width="1" height="1" fill="#a6a6a6"/><rect x="452" y="121" width="1" height="1" fill="#000"/><rect x="453" y="121" width="1" height="1" fill="#000"/><rect x="454" y="121" width="1" height="1" fill="#a6a6a6"/><rect x="455" y="121" width="1" height="1" fill="#a6a6a6"/><rect x="456" y="121" width="1" height="1" fill="#a6a6a6"/><rect x="457" y="121" width="1" height="1" fill="#1a1a1a"/><rect x="449" y="122" width="1" height="1" fill="#1a1a1a"/><rect x="450" y="122" width="1" height="1" fill="#a6a6a6"/><rect x="451" y="122" width="1" height="1" fill="#a6a6a6"/><rect x="452" y="122" width="1" height="1" fill="#a6a6a6"/><rect x="453" y="122" width="1" height="1" fill="#a6a6a6"/><rect x="454" y="122" width="1" height="1" fill="#a6a6a6"/><rect x="455" y="122" width="1" height="1" fill="#a6a6a6"/><rect x="456" y="122" width="1" height="1" fill="#1a1a1a"/><rect x="449" y="123" width="1" height="1" fill="#1a1a1a"/><rect x="450" y="123" width="1" height="1" fill="#1a1a1a"/><rect x="451" y="123" width="1" height="1" fill="#a6a6a6"/><rect x="452" y="123" width="1" height="1" fill="#a6a6a6"/><rect x="453" y="123" width="1" height="1" fill="#a6a6a6"/><rect x="454" y="123" width="1" height="1" fill="#a6a6a6"/><rect x="455" y="123" width="1" height="1" fill="#1a1a1a"/><rect x="456" y="123" width="1" height="1" fill="#1a1a1a"/><rect x="451" y="124" width="1" height="1" fill="#1a1a1a"/><rect x="452" y="124" width="1" height="1" fill="#1a1a1a"/><rect x="453" y="124" width="1" height="1" fill="#1a1a1a"/><rect x="454" y="124" width="1" height="1" fill="#1a1a1a"/>
</g>
<!-- input pin -->
<g shape-rendering="crispEdges">
<rect x="5.5" y="140.5" width="112" height="25" fill="#ccccff" stroke="#3c3c3c" stroke-width="1"/>
<rect x="11.5" y="143.5" width="99" height="15" fill="none" stroke="#a0a0b8" stroke-width="1" stroke-dasharray="4 4"/>
<rect x="-1" y="134" width="6" height="6" fill="#000"/>
<rect x="118" y="134" width="6" height="6" fill="#000"/>
<rect x="-1" y="166" width="6" height="6" fill="#000"/>
<rect x="118" y="166" width="6" height="6" fill="#000"/>
<rect x="-0.5" y="144.5" width="7" height="9" fill="#fff" stroke="#000" stroke-width="1"/>
<rect x="0" y="149" width="1" height="2" fill="#444"/><rect x="2" y="149" width="1" height="2" fill="#444"/><rect x="4" y="149" width="1" height="2" fill="#444"/>
<rect x="10.5" y="163.5" width="7" height="6" fill="#fff" stroke="#000" stroke-width="1"/>
<rect x="12" y="166" width="2" height="2" fill="#000"/><rect x="14" y="165" width="2" height="2" fill="#000"/>
</g>
<text x="11.5" y="156.5" font-size="12" font-weight="bold" fill="#000">inputTitle : String</text>
<!-- output pin -->
<rect x="688.5" y="155.5" width="120" height="25" fill="#ccccff" stroke="#3c3c3c" stroke-width="1" shape-rendering="crispEdges"/>
<text x="694.5" y="170.5" font-size="12" font-weight="bold" fill="#000">outputTitle : String</text>
<!-- smart manipulator toolbar -->
<path d="M136.5 116.5H149.5L152.5 119.5V185.5L149.5 188.5H136.5L133.5 185.5V119.5Z" fill="#fff" stroke="#b4b4b4" stroke-width="1"/>
<g shape-rendering="crispEdges">
<rect x="138" y="124" width="10" height="2" fill="#0033cc"/>
<rect x="142" y="126" width="2" height="9" fill="#0033cc"/>
<rect x="138" y="128" width="2" height="2" fill="#505050"/>
<rect x="138" y="131" width="2" height="2" fill="#505050"/>
<rect x="135" y="141" width="16" height="1" fill="#bdbdbd"/>
<rect x="135" y="144" width="16" height="16" fill="#808080"/>
<rect x="136" y="146" width="11" height="1" fill="#4a80f4"/>
<rect x="136" y="147" width="10" height="1" fill="#4c4c4c"/>
<rect x="146" y="146" width="1" height="7" fill="#4a80f4"/>
<rect x="145" y="148" width="1" height="3" fill="#5a5a5a"/>
<rect x="145" y="155" width="5" height="3" fill="#e6dd9c"/>
<rect x="145" y="155" width="5" height="1" fill="#f4f0c8"/>
</g>
<path d="M143.5 150.5L146.5 153.5L149.5 150.5" fill="none" stroke="#4a80f4" stroke-width="1.2"/>
<path d="M141.5 166.5H145.5L146.5 165.5H149.5V173.5H141.5Z" fill="#efe3a0" stroke="#4a4a4a" stroke-width="1"/>
<rect x="142" y="169" width="7" height="1" fill="#fffbe0"/>
<path d="M140.5 152.5V168.5L144.2 165L147.5 170.5L149.8 169.3L147.8 164.5H151.8Z" fill="#fff" stroke="#111" stroke-width="1.1" stroke-linejoin="miter"/>
<path d="M136 180l2-2" stroke="#333" stroke-width="1"/>
<!-- tooltip -->
<rect x="140.5" y="175.5" width="64" height="15" fill="#ffffe1" stroke="#000" stroke-width="1" shape-rendering="crispEdges"/>
<text x="144.5" y="186.6" font-size="10.6" fill="#000">Object Flow</text>
<rect x="139" y="176" width="1" height="1" fill="#333"/>
<!-- final node -->
<circle cx="392" cy="724" r="12" fill="#bcbcbc"/>
<circle cx="389" cy="721" r="11.6" fill="#fff" stroke="#3c3c3c" stroke-width="1.25"/>
<circle cx="389.5" cy="720.5" r="6.5" fill="#3c3c3c"/>
</svg>
</body></html>
